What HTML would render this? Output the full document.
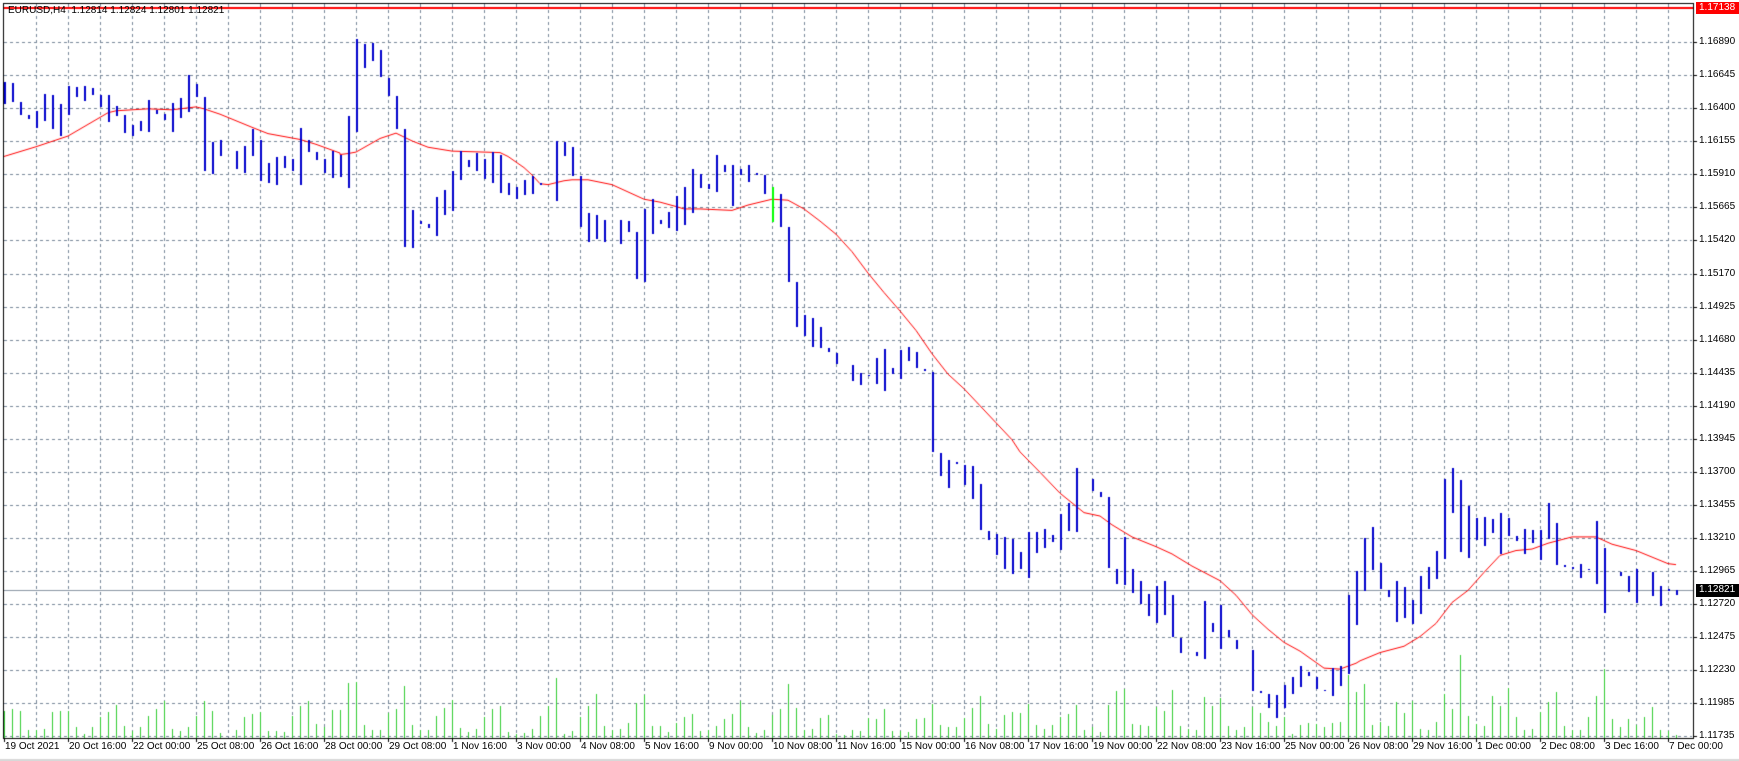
<!DOCTYPE html>
<html><head><meta charset="utf-8">
<style>
html,body{margin:0;padding:0;background:#fff;width:1739px;height:761px;overflow:hidden;font-family:"Liberation Sans",sans-serif;}
#c{position:absolute;left:0;top:0;}
.t{position:absolute;font-size:10px;color:#000;white-space:nowrap;line-height:12px;}
.pl{left:1699px;}
.dl{top:741px;}
</style></head><body>
<canvas id="c" width="1739" height="761"></canvas>
<div class="t" style="left:8px;top:5px;">EURUSD,H4&nbsp; 1.12814 1.12824 1.12801 1.12821</div>
<div id="labels"></div>
<div class="t" style="left:1696px;top:2px;width:43px;height:12px;background:#ff0000;color:#fff;padding-left:3px;box-sizing:border-box;">1.17138</div>
<div class="t" style="left:1696px;top:584px;width:43px;height:13px;background:#000;color:#fff;padding-left:3px;box-sizing:border-box;">1.12821</div>
<script>
var K=1/2.058;
var C=[
[170,210,168,212,1],[172,207,170,208,0],[210,233,210,235,0],[237,243,237,243,0],[239,245,228,262,1],[195,240,193,246,1],[197,262,195,263,0],[230,268,215,277,1],[180,230,177,235,1],[181,197,180,198,0],
[180,204,176,206,1],[181,193,181,194,0],[195,218,195,219,0],[216,218,195,250,0],[218,236,218,237,0],[237,270,237,271,0],[264,275,258,277,1],[264,266,248,268,1],[223,265,205,270,1],[226,232,226,232,0],
[235,244,235,244,0],[216,246,212,270,1],[210,222,202,240,1],[170,210,155,228,1],[172,197,172,198,0],[200,349,200,350,0],[320,352,293,356,1],[317,319,288,320,0],null,[324,326,310,345,1],
[312,325,300,353,1],[287,312,265,320,1],[290,369,288,370,0],[349,372,335,375,1],[330,365,323,378,1],[325,330,322,343,1],[328,349,328,349,0],[285,350,264,378,1],[289,310,288,310,0],[313,327,313,327,0],
[328,355,328,355,0],[317,357,310,365,1],[320,360,318,362,0],[255,362,238,385,1],[118,252,80,270,1],[114,118,90,138,1],[101,109,88,123,1],[103,155,103,156,0],[160,195,160,195,0],[197,263,197,263,0],
[266,505,266,506,0],[440,507,433,508,1],[454,458,454,458,0],[462,468,462,468,0],[412,470,405,483,1],[400,412,390,440,1],[360,398,352,432,1],[320,358,310,368,1],[330,342,330,342,0],[326,345,315,350,1],
[328,365,328,366,0],[316,368,312,375,1],[318,395,318,396,0],[394,396,376,400,0],[392,403,385,408,1],[382,393,370,400,1],[375,381,363,397,1],[377,379,377,379,0],null,[303,383,290,412,1],
[299,301,292,318,1],[303,360,303,360,0],[363,465,363,466,0],[440,467,438,497,1],[442,490,442,490,0],[465,492,452,495,1],null,[453,471,453,500,1],[455,475,455,475,0],[478,572,478,572,0],
[437,575,430,578,1],[425,437,410,480,1],[452,458,452,458,0],[447,461,437,468,1],[442,444,403,473,1],[423,443,385,462,1],[375,423,348,436,1],[371,377,358,385,1],[379,387,379,387,0],[337,390,318,393,1],
[340,351,340,351,0],[346,354,340,422,1],[348,358,348,358,0],[356,358,340,372,0],[357,358,357,358,0],[361,397,361,397,0],[399,401,385,455,2],[400,465,400,465,0],[467,578,467,578,0],[581,671,581,671,0],
[671,673,648,690,0],[669,671,655,712,0],[672,714,672,714,0],[717,723,717,723,0],[727,747,727,747,0],null,[752,782,752,782,0],[769,784,767,790,1],[771,772,771,772,0],[763,775,737,789,1],
[755,763,718,802,1],[757,767,757,767,0],[724,764,720,778,1],[722,724,714,740,1],[725,755,725,755,0],[759,761,759,761,0],[765,928,765,928,0],[932,978,932,978,0],[949,977,946,1002,1],[950,952,950,952,0],
[956,996,956,996,0],[995,997,960,1025,0],[997,1088,997,1088,0],[1092,1110,1092,1110,0],[1102,1104,1100,1140,0],[1105,1168,1105,1168,0],[1133,1170,1110,1180,1],[1135,1168,1135,1168,0],[1115,1170,1095,1187,1],[1111,1113,1095,1135,1],
[1100,1112,1088,1125,1],[1101,1114,1101,1114,0],[1080,1117,1058,1130,1],[1072,1080,1035,1090,1],[973,1072,963,1093,1],null,[985,1008,985,1008,0],[1013,1021,1013,1021,0],[1023,1167,1023,1167,0],[1170,1200,1170,1200,0],
[1172,1202,1105,1202,1],[1172,1218,1172,1218,0],[1196,1242,1196,1242,0],[1228,1243,1222,1265,1],[1222,1228,1205,1280,1],[1221,1223,1195,1263,1],[1224,1308,1224,1308,0],[1313,1342,1313,1342,0],null,[1342,1348,1342,1348,0],
[1280,1352,1237,1355,1],[1283,1299,1283,1299,0],[1295,1303,1246,1333,1],[1297,1309,1297,1309,0],[1318,1333,1318,1333,0],null,[1337,1420,1337,1420,0],[1422,1424,1422,1424,0],[1428,1455,1428,1455,0],[1450,1457,1430,1475,1],
[1424,1448,1410,1455,1],[1410,1424,1393,1427,1],[1382,1410,1370,1412,1],[1383,1390,1383,1390,0],[1393,1416,1393,1416,0],[1419,1421,1419,1421,0],[1395,1420,1375,1430,1],[1378,1395,1370,1410,1],[1265,1380,1225,1385,1],[1188,1265,1175,1285,1],
[1160,1188,1108,1215,1],[1113,1157,1085,1170,1],[1158,1210,1158,1210,0],[1215,1227,1215,1227,0],[1206,1228,1195,1278,1],[1208,1270,1208,1270,0],[1256,1270,1235,1283,1],[1194,1255,1185,1262,1],[1184,1192,1167,1210,1],[1136,1185,1133,1190,1],
[992,1137,985,1148,1],[984,992,964,1053,1],[988,1133,988,1133,0],[1067,1137,1042,1147,1],[1066,1110,1066,1110,0],[1066,1112,1064,1122,1],[1068,1095,1068,1095,0],[1065,1097,1055,1138,1],[1066,1102,1066,1102,0],[1104,1112,1104,1112,0],
[1090,1115,1088,1138,1],[1091,1115,1091,1115,0],[1099,1117,1090,1150,1],[1073,1100,1035,1108,1],[1077,1160,1077,1160,0],[1162,1164,1162,1164,0],[1166,1168,1166,1168,0],[1169,1171,1160,1188,1],[1170,1172,1170,1172,0],[1140,1175,1073,1200,1],
[1136,1138,1127,1260,1],null,[1177,1183,1177,1183,0],[1185,1217,1185,1217,0],[1175,1220,1170,1238,1],null,[1178,1225,1178,1225,0],[1208,1228,1205,1245,1],[1212,1214,1212,1214,0],[1215,1217,1214,1222,0]
];
var V=[1463,1460,1463,1502,1502,1500,1466,1463,1463,1497,1510,1497,1475,1465,1450,1494,1505,1497,1474,1460,1442,1500,1505,1497,1474,1442,1464,1508,1520,1502,1475,1470,1466,1504,1504,1507,1473,1452,1442,1490,1497,1462,1462,
1405,1403,1493,1502,1502,1467,1460,1412,1493,1503,1502,1473,1458,1441,1498,1507,1500,1475,1460,1453,1507,1510,1508,1500,1473,1452,1396,1510,1505,1475,1452,1428,1494,1502,1500,1487,1447,1430,1494,1494,1507,1487,1475,
1470,1505,1502,1495,1480,1470,1443,1497,1508,1502,1472,1460,1408,1457,1502,1500,1477,1472,1510,1512,1502,1504,1478,1480,1460,1505,1504,1506,1480,1478,1448,1492,1497,1497,1478,1457,1433,1490,1500,1472,1465,1468,
1448,1492,1500,1492,1475,1470,1450,1503,1497,1507,1450,1422,1417,1490,1493,1495,1455,1463,1420,1495,1500,1502,1435,1452,1437,1495,1502,1497,1455,1467,1485,1494,1475,1510,1492,1487,1490,1497,1487,1485,1390,1425,
1408,1492,1485,1495,1445,1467,1443,1500,1502,1485,1428,1460,1348,1473,1490,1495,1433,1452,1415,1475,1503,1500,1465,1445,1425,1495,1502,1502,1475,1432,1377,1480,1497,1480,1492,1475,1455,1502,1505,1512];
var MA=[[0,[[12,322],[108,302],[204,280],[324,232],[348,228],[444,224],[516,226],[588,220],[612,224],[660,235],[756,262],[804,275],[900,287],[948,297],[1020,315]]],
[340,[[0,318],[24,316],[48,313],[120,285],[168,274],[192,282],[216,290],[264,303],[336,311],[480,314],[504,322],[552,345],[576,360],[600,378],[624,380],[672,372],[696,370],[744,370],[816,380],[864,395],[912,410],[960,416],[1008,425]]],
[680,[[12,430],[60,430],[156,433],[204,422],[276,410],[324,412],[372,430],[420,455],[468,482],[516,518],[564,562],[612,602],[660,640],[708,680],[756,728],[804,770],[852,800],[900,835],[948,870],[996,905]]],
[1020,[[0,930],[60,972],[120,1015],[192,1055],[240,1062],[276,1080],[336,1105],[408,1125],[456,1140],[516,1165],[600,1195],[648,1225],[696,1265],[744,1295],[792,1322],[840,1340],[912,1375],[960,1377],[1008,1365]]],
[1360,[[0,1360],[60,1343],[132,1330],[180,1310],[228,1283],[276,1240],[324,1215],[372,1178],[420,1143],[468,1133],[516,1130],[564,1118],[636,1105],[708,1105],[756,1120],[828,1133],[924,1160],[948,1162]]]];
var cv=document.getElementById('c'),g=cv.getContext('2d');
g.fillStyle='#fff';g.fillRect(0,0,1739,761);
g.strokeStyle='#778899';g.lineWidth=1;g.setLineDash([3,3]);
var html='';
var prices=['1.16890','1.16645','1.16400','1.16155','1.15910','1.15665','1.15420','1.15170','1.14925','1.14680','1.14435','1.14190','1.13945','1.13700','1.13455','1.13210','1.12965','1.12720','1.12475','1.12230','1.11985','1.11735'];
for(var k=0;k<22;k++){var y=Math.round(42.3+k*33.03);g.beginPath();g.moveTo(4,y+0.5);g.lineTo(1692,y+0.5);g.stroke();
 html+='<div class="t pl" style="top:'+(y-6)+'px">'+prices[k]+'</div>';}
for(var x=36;x<1693;x+=32){g.beginPath();g.moveTo(x+0.5,4);g.lineTo(x+0.5,738);g.stroke();}
g.setLineDash([]);
var dates=['19 Oct 2021','20 Oct 16:00','22 Oct 00:00','25 Oct 08:00','26 Oct 16:00','28 Oct 00:00','29 Oct 08:00','1 Nov 16:00','3 Nov 00:00','4 Nov 08:00','5 Nov 16:00','9 Nov 00:00','10 Nov 08:00','11 Nov 16:00','15 Nov 00:00','16 Nov 08:00','17 Nov 16:00','19 Nov 00:00','22 Nov 08:00','23 Nov 16:00','25 Nov 00:00','26 Nov 08:00','29 Nov 16:00','1 Dec 00:00','2 Dec 08:00','3 Dec 16:00','7 Dec 00:00'];
g.fillStyle='#000';
for(var d=0;d<dates.length;d++){var dx=4+64*d;g.fillRect(dx,738,1,4);html+='<div class="t dl" style="left:'+(dx+1)+'px">'+dates[d]+'</div>';}
for(var k=0;k<22;k++){var y=Math.round(42.3+k*33.03);g.fillRect(1693,y,4,1);}
document.getElementById('labels').innerHTML=html;
g.fillStyle='#8a96a4';g.fillRect(4,590,1689,1);
g.fillStyle='#32cd32';
for(var i=0;i<V.length&&i<210;i++){var t=Math.round(V[i]*K);if(t<738)g.fillRect(4+8*i,t,1,738-t);}
g.strokeStyle='#ff0000';g.lineWidth=1;g.beginPath();var first=true;
MA.forEach(function(s){s[1].forEach(function(p){var X=s[0]+p[0]/3,Y=p[1]*K;if(first){g.moveTo(X,Y);first=false;}else g.lineTo(X,Y);});});
g.stroke();
for(var i=0;i<C.length;i++){var c=C[i];if(!c)continue;var x=4+8*i;
 var top=Math.round(c[0]*K),bot=Math.round(c[1]*K),hi=Math.round(c[2]*K),lo=Math.round(c[3]*K);
 var col=c[4]==2?'#00ff00':'#0000cc';g.fillStyle=col;
 g.fillRect(x,hi,1,Math.max(1,lo-hi+1));
 g.fillRect(x+1,hi,1,Math.max(1,lo-hi+1));
 var h=Math.max(1,bot-top);
 if(c[4]==1&&h>2){g.fillStyle='#fff';g.fillRect(x-1,top,4,h);g.strokeStyle=col;g.lineWidth=1;g.strokeRect(x-1.5,top+0.5,4,h-1);}
 else{g.fillStyle=col;if(h<=2){g.fillRect(x-2,top,6,2);}else g.fillRect(x-1,top,4,h);}
}
g.fillStyle='#ff0000';g.fillRect(4,7,1689,2);
g.fillStyle='#000';g.fillRect(3,3,1690,1);g.fillRect(3,3,1,736);g.fillRect(1693,3,1,736);g.fillRect(3,738,1691,1);
g.fillStyle='#d8d8d8';g.fillRect(0,759,1739,2);
</script>
</body></html>
